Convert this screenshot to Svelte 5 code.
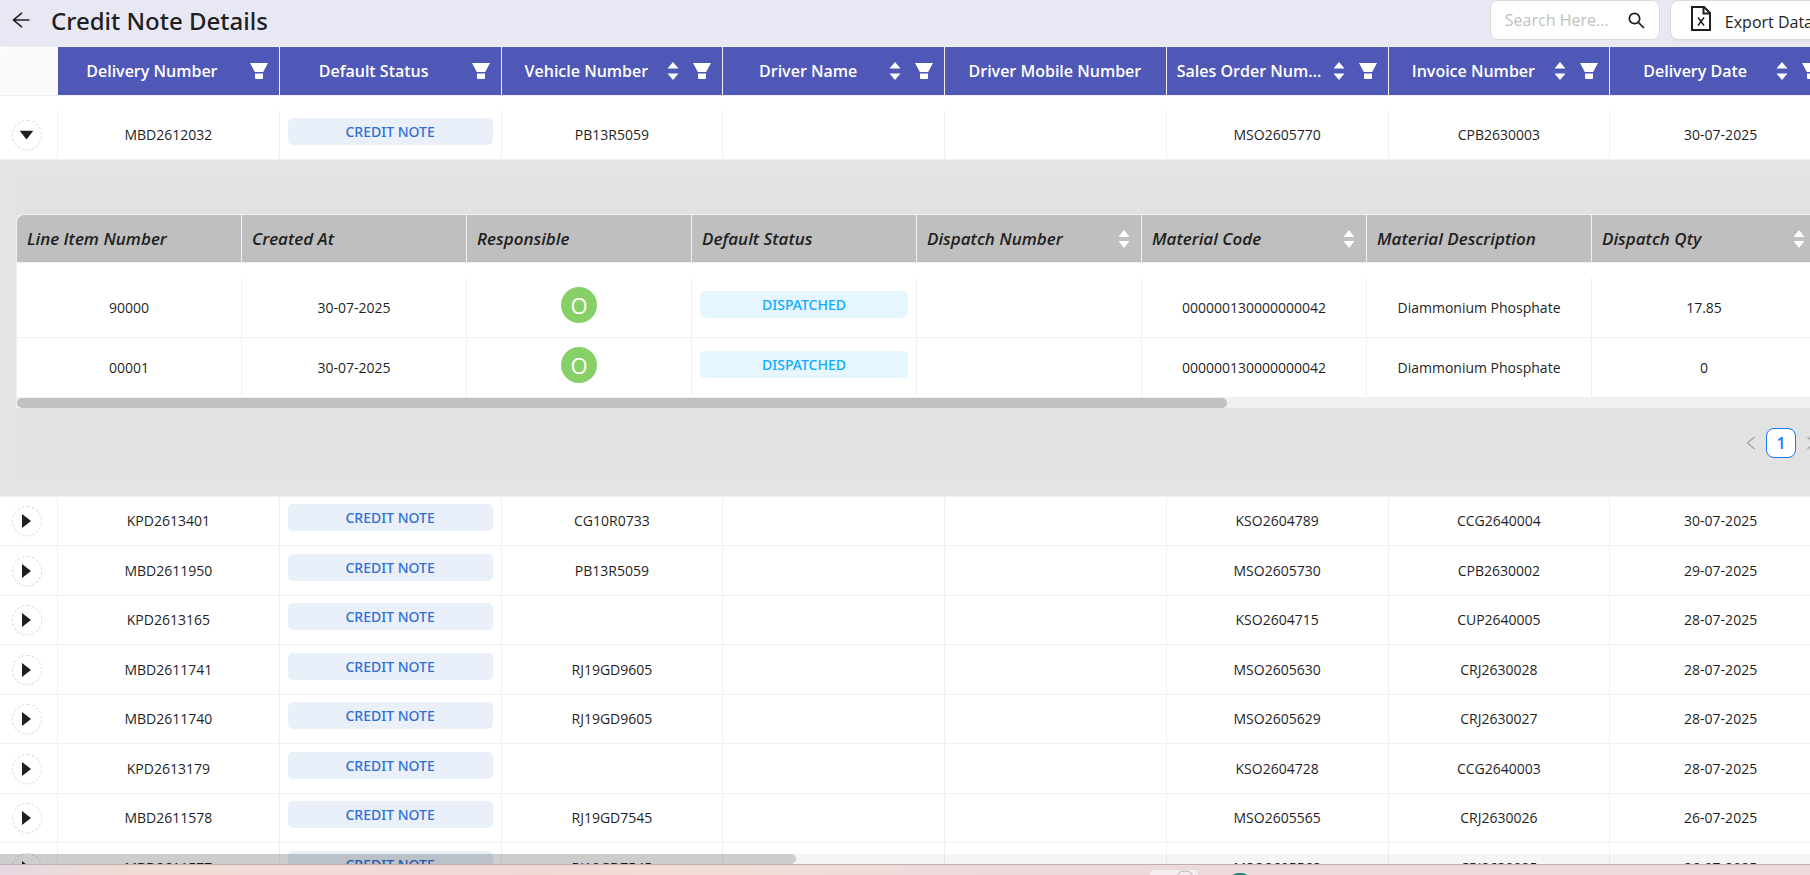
<script>
  let search = '';
  let openRow = 'MBD2612032';

  const columns = [
    { label: 'Delivery Number', filter: true },
    { label: 'Default Status', filter: true },
    { label: 'Vehicle Number', sort: true, filter: true },
    { label: 'Driver Name', sort: true, filter: true },
    { label: 'Driver Mobile Number' },
    { label: 'Sales Order Number', sort: true, filter: true },
    { label: 'Invoice Number', sort: true, filter: true },
    { label: 'Delivery Date', sort: true, filter: true }
  ];

  const rows = [
    { delivery: 'MBD2612032', vehicle: 'PB13R5059', order: 'MSO2605770', invoice: 'CPB2630003', date: '30-07-2025' },
    { delivery: 'KPD2613401', vehicle: 'CG10R0733', order: 'KSO2604789', invoice: 'CCG2640004', date: '30-07-2025' },
    { delivery: 'MBD2611950', vehicle: 'PB13R5059', order: 'MSO2605730', invoice: 'CPB2630002', date: '29-07-2025' },
    { delivery: 'KPD2613165', vehicle: '', order: 'KSO2604715', invoice: 'CUP2640005', date: '28-07-2025' },
    { delivery: 'MBD2611741', vehicle: 'RJ19GD9605', order: 'MSO2605630', invoice: 'CRJ2630028', date: '28-07-2025' },
    { delivery: 'MBD2611740', vehicle: 'RJ19GD9605', order: 'MSO2605629', invoice: 'CRJ2630027', date: '28-07-2025' },
    { delivery: 'KPD2613179', vehicle: '', order: 'KSO2604728', invoice: 'CCG2640003', date: '28-07-2025' },
    { delivery: 'MBD2611578', vehicle: 'RJ19GD7545', order: 'MSO2605565', invoice: 'CRJ2630026', date: '26-07-2025' },
    { delivery: 'MBD2611577', vehicle: 'RJ19GD7545', order: 'MSO2605568', invoice: 'CRJ2630025', date: '26-07-2025' }
  ];

  const lineColumns = [
    { label: 'Line Item Number' },
    { label: 'Created At' },
    { label: 'Responsible' },
    { label: 'Default Status' },
    { label: 'Dispatch Number', sort: true },
    { label: 'Material Code', sort: true },
    { label: 'Material Description' },
    { label: 'Dispatch Qty', sort: true }
  ];

  const lineItems = [
    { line: '90000', created: '30-07-2025', owner: 'O', code: '000000130000000042', material: 'Diammonium Phosphate', qty: '17.85' },
    { line: '00001', created: '30-07-2025', owner: 'O', code: '000000130000000042', material: 'Diammonium Phosphate', qty: '0' }
  ];

  function toggle(id) {
    openRow = openRow === id ? '' : id;
  }
</script>

<div class="page">
  <header class="topbar">
    <button class="back" aria-label="Back">
      <svg width="18" height="16" viewBox="0 0 18 16" fill="none" stroke="#1f1f1f" stroke-width="1.6">
        <path d="M17.5 8H1.5M10 .8 1.5 8l8.500 7.200" />
      </svg>
    </button>
    <h1>Credit Note Details</h1>
    <label class="search">
      <input type="text" placeholder="Search Here..." aria-label="Search" bind:value={search} />
      <svg width="17" height="17" viewBox="0 0 17 17" fill="none" stroke="#1f1f1f" stroke-width="1.7">
        <circle cx="6.500" cy="6.500" r="5.200" />
        <path d="M10.300 10.300 16 16" />
      </svg>
    </label>
    <button class="export">
      <svg width="20" height="25" viewBox="0 0 20 25" fill="none" stroke="#1f1f1f" stroke-width="2">
        <path d="M1 1h12l6 6v17H1z" />
        <path d="M12.500 1v6.500H19" />
        <path d="M7 11.500l6 8M13 11.500l-6 8" stroke-width="1.500" />
      </svg>
      <span>Export Data</span>
    </button>
  </header>

  <main class="viewport">
    <table class="grid">
      <colgroup>
        <col class="col-expand" />
        {#each columns as column}
          <col />
        {/each}
      </colgroup>
      <thead>
        <tr>
          <th class="corner"></th>
          {#each columns as column}
            <th>
              <div class="head">
                <span class="head-label">{column.label}</span>
                {#if column.sort}
                  <button class="icon" aria-label="Sort {column.label}">
                    <svg width="12" height="18" viewBox="0 0 12 18" fill="#fff">
                      <path d="M6 0l5.500 6.500H.5zM6 18l5.500-6.500H.5z" />
                    </svg>
                  </button>
                {/if}
                {#if column.filter}
                  <button class="icon filter" aria-label="Filter {column.label}">
                    <svg width="18" height="16" viewBox="0 0 18 16" fill="#fff">
                      <path d="M0 0h18l-4.800 9H4.800z" />
                      <path d="M5 10.500h8V15q0 1-1 1H6q-1 0-1-1z" />
                    </svg>
                  </button>
                {/if}
              </div>
            </th>
          {/each}
        </tr>
      </thead>
      <tbody>
        <tr class="spacer"><td colspan={columns.length + 1}></td></tr>
        {#each rows as row}
          <tr class="row">
            <td class="expand-cell">
              <button
                class="expand"
                aria-label="Toggle {row.delivery}"
                aria-expanded={openRow === row.delivery}
                on:click={() => toggle(row.delivery)}
              >
                <svg class:open={openRow === row.delivery} width="9" height="14" viewBox="0 0 9 14" fill="#1f1f1f">
                  <path d="M0 0l9 7-9 7z" />
                </svg>
              </button>
            </td>
            <td>{row.delivery}</td>
            <td><span class="tag tag--credit">CREDIT NOTE</span></td>
            <td>{row.vehicle}</td>
            <td></td>
            <td></td>
            <td>{row.order}</td>
            <td>{row.invoice}</td>
            <td>{row.date}</td>
          </tr>
          {#if openRow === row.delivery}
            <tr class="detail-row">
              <td colspan={columns.length + 1}>
                <div class="detail">
                  <div class="lines-wrap">
                    <table class="lines">
                      <thead>
                        <tr>
                          {#each lineColumns as column}
                            <th>
                              <div class="line-head">
                                <span>{column.label}</span>
                                {#if column.sort}
                                  <button class="icon" aria-label="Sort {column.label}">
                                    <svg width="12" height="18" viewBox="0 0 12 18" fill="#fff">
                                      <path d="M6 0l5.500 7H.5zM6 18l5.500-7H.5z" />
                                    </svg>
                                  </button>
                                {/if}
                              </div>
                            </th>
                          {/each}
                        </tr>
                      </thead>
                      <tbody>
                        <tr class="spacer"><td colspan={lineColumns.length}></td></tr>
                        {#each lineItems as item}
                          <tr class="line">
                            <td>{item.line}</td>
                            <td>{item.created}</td>
                            <td><span class="avatar">{item.owner}</span></td>
                            <td><span class="tag tag--dispatched">DISPATCHED</span></td>
                            <td></td>
                            <td>{item.code}</td>
                            <td>{item.material}</td>
                            <td>{item.qty}</td>
                          </tr>
                        {/each}
                      </tbody>
                    </table>
                    <div class="line-scroll"><div class="line-thumb"></div></div>
                  </div>
                  <nav class="pager" aria-label="Line item pages">
                    <button class="pager-arrow" aria-label="Previous page">
                      <svg width="9" height="14" viewBox="0 0 9 14" fill="none" stroke="#a3a3a3" stroke-width="1.300">
                        <path d="M8.500 1l-7 6 7 6" />
                      </svg>
                    </button>
                    <button class="pager-page">1</button>
                    <button class="pager-arrow" aria-label="Next page">
                      <svg width="9" height="14" viewBox="0 0 9 14" fill="none" stroke="#a3a3a3" stroke-width="1.300">
                        <path d="M.5 1l7 6-7 6" />
                      </svg>
                    </button>
                  </nav>
                </div>
              </td>
            </tr>
          {/if}
        {/each}
      </tbody>
    </table>
    <div class="scrollbar"><div class="thumb"></div></div>
  </main>

  <footer class="taskbar">
    <svg width="150" height="10" viewBox="0 0 150 10" aria-hidden="true">
      <rect x="0" y="5" width="48" height="10" rx="4" fill="#f6eeee" />
      <path d="M28 10a7 4 0 0 1 14 0" fill="none" stroke="#b5b5b5" />
      <ellipse cx="90" cy="13" rx="9" ry="5" fill="#12877a" />
    </svg>
  </footer>
</div>

<style>
  :global(body) {
    margin: 0;
    background: #fff;
  }

  .page {
    display: flex;
    flex-direction: column;
    height: 100vh;
    overflow: hidden;
    font-family: 'Segoe UI', 'Open Sans', 'Noto Sans', sans-serif;
    font-size: 14px;
    line-height: 20px;
    color: #1f1f1f;
  }

  button {
    padding: 0;
    border: none;
    background: none;
    font: inherit;
    color: inherit;
    cursor: pointer;
  }

  svg {
    display: block;
  }

  .topbar {
    display: flex;
    align-items: flex-start;
    width: calc(100% + 24px);
    height: 46px;
    background: #e8e8f5;
    flex: none;
  }

  .back {
    padding: 12px;
  }

  h1 {
    margin: 0 auto 0 9px;
    font-family: 'Segoe UI', 'Noto Sans', 'Open Sans', sans-serif;
    font-size: 24px;
    line-height: 42px;
    font-weight: 500;
  }

  .search {
    display: flex;
    align-items: center;
    box-sizing: border-box;
    width: 170px;
    height: 40px;
    margin-right: 10px;
    padding: 0 14px;
    background: #fff;
    border: 1px solid #d9d9d9;
    border-radius: 8px;
  }

  .search input {
    flex: 1;
    min-width: 0;
    padding: 0;
    border: none;
    outline: none;
    background: none;
    font: inherit;
    font-size: 16px;
  }

  .search input::placeholder {
    color: #bfbfbf;
    opacity: 1;
  }

  .export {
    display: flex;
    align-items: flex-start;
    gap: 14px;
    box-sizing: border-box;
    height: 40px;
    padding: 5px 20px 0;
    background: #fff;
    border: 1px solid #d9d9d9;
    border-radius: 8px;
    box-shadow: 0 2px 0 rgba(0, 0, 0, 0.02);
    font-size: 16px;
    line-height: 32px;
    white-space: nowrap;
  }

  .viewport {
    position: relative;
    flex: 1;
    min-height: 0;
    overflow: hidden;
    border-top: 1px solid #f0f0f0;
  }

  table {
    border-collapse: separate;
    border-spacing: 0;
    table-layout: fixed;
  }

  .grid {
    width: calc(100% + 22px);
  }

  .col-expand {
    width: 58px;
  }

  th,
  td {
    box-sizing: border-box;
    padding: 0;
    text-align: center;
    border-right: 1px solid #f0f0f0;
    border-bottom: 1px solid #f0f0f0;
  }

  .grid > thead th {
    height: 49px;
    padding: 0 11px 0 10px;
    background: #4f57b7;
    color: #fff;
    font-size: 16px;
    font-weight: 600;
  }

  .grid > thead th.corner {
    background: #fafafa;
    border-right: none;
    border-top-left-radius: 8px;
  }

  .head {
    display: flex;
    align-items: center;
    gap: 6px;
  }

  .head-label {
    flex: 1;
    overflow: hidden;
    text-overflow: ellipsis;
    white-space: nowrap;
    line-height: 22px;
  }

  .icon {
    flex: none;
  }

  .filter {
    margin-left: 8px;
  }

  .spacer td {
    height: 15px;
    border: none;
  }

  .row td {
    height: 49px;
  }

  .row:nth-child(odd) td {
    height: 50px;
  }

  .row td.expand-cell {
    padding-right: 4px;
  }

  .expand {
    display: inline-flex;
    align-items: center;
    justify-content: center;
    box-sizing: border-box;
    width: 30px;
    height: 30px;
    border: 1px dashed #d9d9d9;
    border-radius: 50%;
    box-shadow: 0 2px 0 rgba(0, 0, 0, 0.02);
    vertical-align: middle;
  }

  .expand .open {
    transform: rotate(90deg);
  }

  .tag {
    display: block;
    height: 27px;
    line-height: 27px;
    margin: 0 8px 7px;
    border-radius: 5px;
    font-family: 'Segoe UI', 'Noto Sans', 'Open Sans', sans-serif;
    font-weight: 500;
  }

  .tag--credit {
    background: #e9f0fa;
    color: #2f6fd6;
  }

  .tag--dispatched {
    background: #e6f6ff;
    color: #0eabff;
  }

  .detail-row > td {
    padding: 18px 0 18px 16px;
    background: #e2e4e6;
    border-right: none;
  }

  .detail {
    padding-top: 36px;
    background: #e2e2e2;
  }

  .lines-wrap {
    overflow: hidden;
    border-left: 1px solid #f0f0f0;
    border-top: 1px solid #f0f0f0;
    border-top-left-radius: 8px;
  }

  .lines {
    width: 1800px;
    background: #fff;
  }

  .lines th {
    height: 48px;
    padding: 0 11px 0 10px;
    background: #bfbfbf;
    font-size: 17px;
    font-style: italic;
    font-weight: 600;
    text-align: left;
  }

  .line-head {
    display: flex;
    align-items: center;
    justify-content: space-between;
  }

  .line td {
    height: 60px;
  }

  .avatar {
    display: block;
    width: 36px;
    height: 36px;
    line-height: 36px;
    margin: 0 auto 6px;
    border-radius: 50%;
    background: #87d068;
    color: #fff;
    font-size: 22px;
  }

  .line-scroll {
    background: #f1f1f1;
  }

  .line-thumb {
    width: calc(100% * 2 / 3);
    height: 10px;
    border-radius: 5px;
    background: #c1c1c1;
  }

  .pager {
    display: flex;
    align-items: center;
    justify-content: flex-end;
    gap: 11px;
    padding: 20px 16px 20px 0;
  }

  .pager-page {
    box-sizing: border-box;
    width: 30px;
    height: 30px;
    border: 1px solid #1677ff;
    border-radius: 8px;
    background: #fff;
    color: #1677ff;
    font-size: 16px;
    font-weight: 600;
  }

  .scrollbar {
    position: absolute;
    left: 0;
    right: 0;
    bottom: 0;
    background: rgba(0, 0, 0, 0.04);
  }

  .thumb {
    width: 44%;
    height: 10px;
    border-radius: 0 5px 5px 0;
    background: rgba(0, 0, 0, 0.16);
  }

  .taskbar {
    flex: none;
    height: 10px;
    overflow: hidden;
    border-top: 1px solid #bfb0b0;
    background: linear-gradient(90deg, #e6d8e2, #f0dcd2 8%, #f2dadb 18%, #f0d8d5 30%, #f3ded6 38%, #ecd9dc 55%, #eedadd);
  }

  .taskbar svg {
    margin-left: 1150px;
  }
</style>
